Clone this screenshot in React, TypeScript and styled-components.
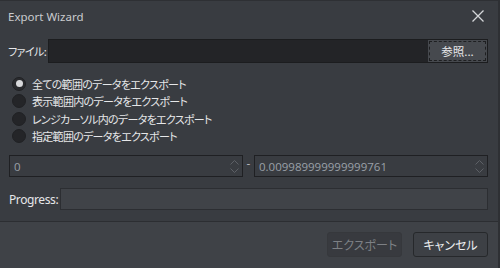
import styled, { createGlobalStyle } from "styled-components"

const GlobalStyle = createGlobalStyle`
  html, body {
    margin: 0;
    padding: 0;
    background: #393c41;
  }
  * {
    box-sizing: border-box;
  }
`

const Window = styled.div`
  width: 500px;
  height: 268px;
  background: #393c41;
  border-top: 1px solid #2e3034;
  border-right: 2px solid #2e3034;
  display: flex;
  flex-direction: column;
  font-family: "Noto Sans CJK JP", "Noto Sans", sans-serif;
  font-feature-settings: "palt";
  color: #e6e7e9;
  font-size: 12px;
`

const TitleBar = styled.div`
  height: 32px;
  display: flex;
  align-items: center;
  justify-content: space-between;
  padding: 0 12px 2px 8px;
`

const Title = styled.div`
  font-family: "Noto Sans", sans-serif;
  font-size: 11.5px;
  color: #c9cbce;
`

const CloseButton = styled.button`
  width: 16px;
  height: 16px;
  padding: 0;
  border: none;
  background: transparent;
  display: flex;
  align-items: center;
  justify-content: center;
`

const Body = styled.div`
  flex: 1;
  padding: 6px 10px 0 8px;
  display: flex;
  flex-direction: column;
`

const FileRow = styled.div`
  display: flex;
  align-items: center;
  height: 24px;
  gap: 2px;
`

const Label = styled.span`
  font-size: 11px;
  color: #e6e7e9;
  white-space: nowrap;
  letter-spacing: -0.6px;
  flex-shrink: 0;
`

const FileInput = styled.div`
  flex: 1;
  height: 24px;
  background: #232427;
  border: 1px solid #1c1d1f;
  display: flex;
  justify-content: flex-end;
  align-items: center;
  padding-right: 1px;
`

const BrowseButton = styled.button`
  width: 57px;
  height: 20px;
  background: #46494e;
  border: 1px dashed #1e1f21;
  outline: 1px solid #46494e;
  color: #e6e7e9;
  font-family: "Noto Sans CJK JP", sans-serif;
  font-feature-settings: "palt";
  font-size: 11.5px;
  padding: 0;
`

const RadioGroup = styled.div`
  display: flex;
  flex-direction: column;
  margin-top: 12px;
`

const RadioRow = styled.label`
  display: flex;
  align-items: center;
  height: 17.5px;
  gap: 6px;
  padding-left: 4px;
  font-size: 11px;
  letter-spacing: -0.7px;
  color: #e6e7e9;
`

const RadioDot = styled.span<{ $checked?: boolean }>`
  width: 14px;
  height: 14px;
  border-radius: 50%;
  background: ${(p) => (p.$checked ? "#2a2b2e" : "#242528")};
  border: 1px solid #202124;
  display: flex;
  align-items: center;
  justify-content: center;
  &::after {
    content: "";
    display: ${(p) => (p.$checked ? "block" : "none")};
    width: 7px;
    height: 7px;
    border-radius: 50%;
    background: #d8d9db;
  }
`

const RangeRow = styled.div`
  display: flex;
  align-items: center;
  margin-top: 10px;
  padding-left: 1px;
`

const SpinBox = styled.div`
  flex: 1;
  height: 22px;
  background: #393c41;
  border: 1px solid #1f2023;
  display: flex;
  align-items: center;
  padding-left: 4px;
`

const SpinValue = styled.span`
  flex: 1;
  color: #9aa0a8;
  font-family: "Open Sans", "Noto Sans", sans-serif;
  font-size: 11.5px;
`

const SpinArrows = styled.div`
  width: 16px;
  display: flex;
  flex-direction: column;
  align-items: center;
  gap: 3px;
`

const Dash = styled.span`
  width: 11px;
  text-align: center;
  color: #c8cacc;
  font-size: 11px;
  margin-top: -6px;
`

const ProgressRow = styled.div`
  display: flex;
  align-items: center;
  margin-top: 11px;
  padding-left: 1px;
`

const ProgressLabel = styled.span`
  font-family: "Noto Sans", sans-serif;
  font-size: 12px;
  color: #e6e7e9;
  width: 51px;
  letter-spacing: -0.4px;
`

const ProgressBar = styled.div`
  flex: 1;
  height: 22px;
  background: #404348;
  border: 1px solid #2c2e32;
`

const Footer = styled.div`
  height: 47px;
  background: #3f4247;
  border-top: 1px solid #2c2e32;
  display: flex;
  justify-content: flex-end;
  align-items: flex-start;
  gap: 11px;
  padding: 10px 10px 0 0;
`

const FooterButton = styled.button<{ $disabled?: boolean }>`
  width: 75px;
  height: 25px;
  border-radius: 3px;
  border: 1px solid ${(p) => (p.$disabled ? "#36383c" : "#26282b")};
  background: ${(p) => (p.$disabled ? "#383a3f" : "#3d4045")};
  color: ${(p) => (p.$disabled ? "#7d8085" : "#eceef0")};
  font-family: "Noto Sans CJK JP", sans-serif;
  font-feature-settings: "palt";
  font-size: 12px;
  padding: 0;
`

function Chevron({ up }: { up?: boolean }) {
  return (
    <svg width="9" height="5" viewBox="0 0 9 5">
      <path
        d={up ? "M0.5 4.5 L4.5 0.5 L8.5 4.5" : "M0.5 0.5 L4.5 4.5 L8.5 0.5"}
        stroke="#5d6066"
        fill="none"
        strokeWidth="1"
      />
    </svg>
  )
}

const options = [
  "全ての範囲のデータをエクスポート",
  "表示範囲内のデータをエクスポート",
  "レンジカーソル内のデータをエクスポート",
  "指定範囲のデータをエクスポート",
]

export default function App() {
  return (
    <>
      <GlobalStyle />
      <Window>
        <TitleBar>
          <Title>Export Wizard</Title>
          <CloseButton>
            <svg width="12" height="12" viewBox="0 0 12 12">
              <path d="M0.5 0.5 L11.5 11.5 M11.5 0.5 L0.5 11.5" stroke="#d4d6d9" strokeWidth="1.3" />
            </svg>
          </CloseButton>
        </TitleBar>
        <Body>
          <FileRow>
            <Label>ファイル:</Label>
            <FileInput>
              <BrowseButton>参照...</BrowseButton>
            </FileInput>
          </FileRow>
          <RadioGroup>
            {options.map((o, i) => (
              <RadioRow key={o}>
                <RadioDot $checked={i === 0} />
                {o}
              </RadioRow>
            ))}
          </RadioGroup>
          <RangeRow>
            <SpinBox>
              <SpinValue>0</SpinValue>
              <SpinArrows>
                <Chevron up />
                <Chevron />
              </SpinArrows>
            </SpinBox>
            <Dash>-</Dash>
            <SpinBox>
              <SpinValue>0.009989999999999761</SpinValue>
              <SpinArrows>
                <Chevron up />
                <Chevron />
              </SpinArrows>
            </SpinBox>
          </RangeRow>
          <ProgressRow>
            <ProgressLabel>Progress:</ProgressLabel>
            <ProgressBar />
          </ProgressRow>
        </Body>
        <Footer>
          <FooterButton $disabled>エクスポート</FooterButton>
          <FooterButton>キャンセル</FooterButton>
        </Footer>
      </Window>
    </>
  )
}
